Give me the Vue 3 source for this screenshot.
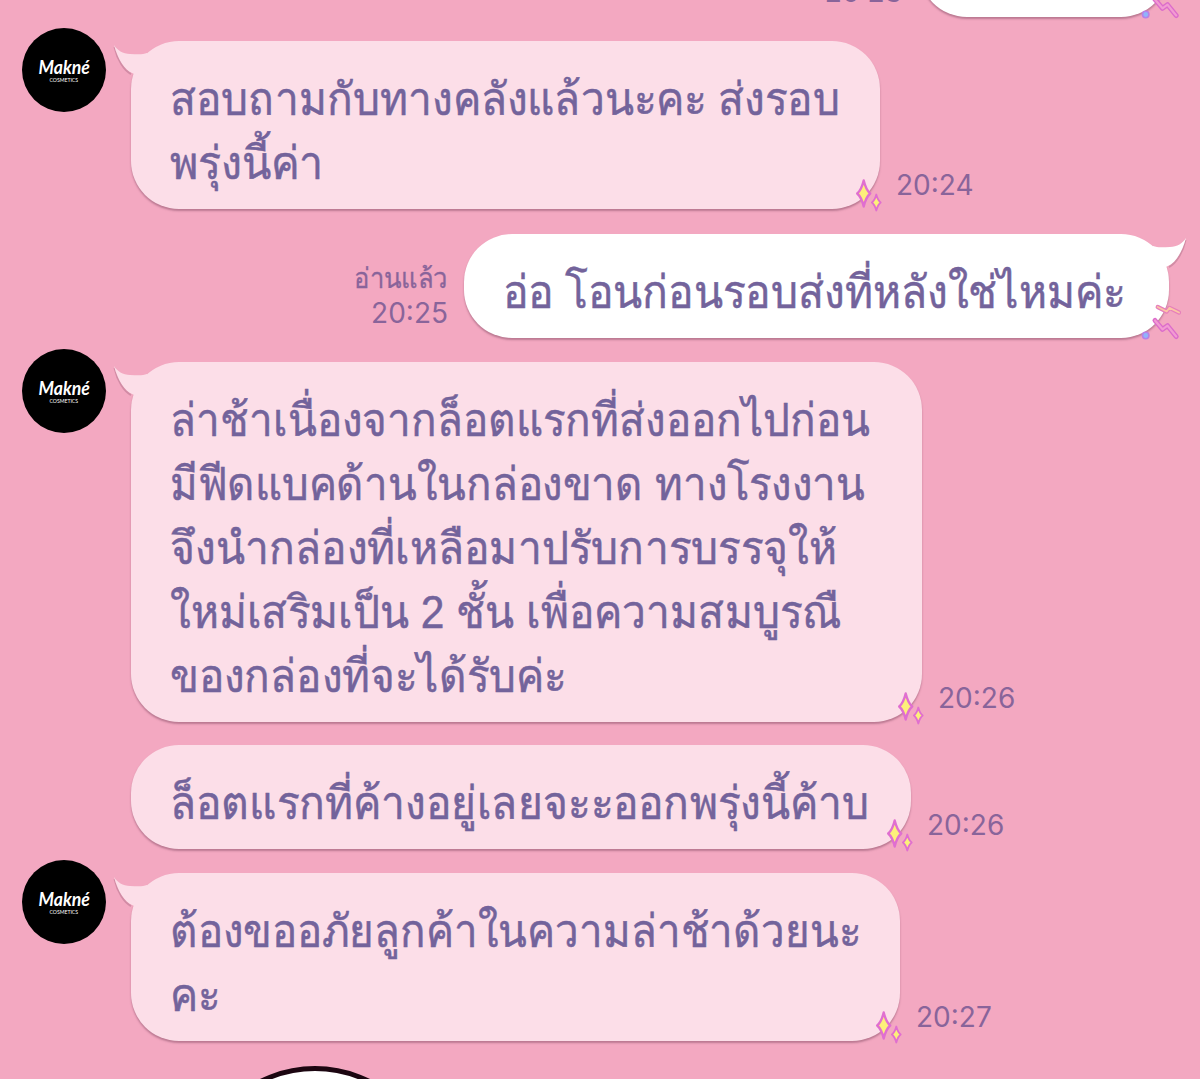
<script setup>
const messages = [
  { id: 1, side: 'own', width: 250, gap: 0, time: '20:23', lines: [] },
  {
    id: 2, side: 'shop', tail: true, width: 749, gap: 24, time: '20:24',
    lines: [
      { text: 'สอบถามกับทางคลังแล้วนะคะ ส่งรอบ', width: 670 },
      { text: 'พรุ่งนี้ค่า', width: 154 },
    ],
  },
  {
    id: 3, side: 'own', tail: true, read: true, width: 705, gap: 25, time: '20:25',
    lines: [{ text: 'อ่อ โอนก่อนรอบส่งที่หลังใช่ไหมค่ะ', width: 623 }],
  },
  {
    id: 4, side: 'shop', tail: true, width: 791, gap: 24, time: '20:26',
    lines: [
      { text: 'ล่าช้าเนื่องจากล็อตแรกที่ส่งออกไปก่อน', width: 700 },
      { text: 'มีฟีดแบคด้านในกล่องขาด ทางโรงงาน', width: 695 },
      { text: 'จึงนำกล่องที่เหลือมาปรับการบรรจุให้', width: 667 },
      { text: 'ใหม่เสริมเป็น 2 ชั้น เพื่อความสมบูรณื', width: 671 },
      { text: 'ของกล่องที่จะได้รับค่ะ', width: 396 },
    ],
  },
  {
    id: 5, side: 'shop', width: 780, gap: 23, time: '20:26',
    lines: [{ text: 'ล็อตแรกที่ค้างอยู่เลยจะะออกพรุ่งนี้ค้าบ', width: 699 }],
  },
  {
    id: 6, side: 'shop', tail: true, width: 769, gap: 24, time: '20:27',
    lines: [
      { text: 'ต้องขออภัยลูกค้าในความล่าช้าด้วยนะ', width: 691 },
      { text: 'คะ', width: 50 },
    ],
  },
]

// Stretches a line of text horizontally to the given width.
const vFit = {
  mounted(el, { value }) {
    el.style.transform = `scaleX(${value / el.offsetWidth})`
  },
}
</script>

<template>
  <main class="chat">
    <section
      v-for="m in messages"
      :key="m.id"
      class="row"
      :class="m.side"
      :style="{ marginTop: m.gap + 'px' }"
    >
      <div v-if="m.side === 'shop'" class="gutter">
        <div v-if="m.tail" class="avatar">
          <span v-fit="51" class="brand">Makné</span>
          <span v-fit="29" class="sub">COSMETICS</span>
        </div>
      </div>

      <div class="bubble" :style="{ width: m.width + 'px' }">
        <svg v-if="m.tail" class="tail" width="38" height="38" viewBox="-18 0 38 38">
          <path class="tail-shade" d="M-16.500 6C-13.500 19-7 29.500 0 33" />
          <path d="M-17 4C-14 9-8 13-1 13C5 13 11 14 16 12L20 20L10 36L1 32C-6 29-13 19-17 4Z" />
        </svg>
        <p v-for="(l, i) in m.lines" :key="i" class="line">
          <span v-fit="l.width" class="text">{{ l.text }}</span>
        </p>
        <svg v-if="m.side === 'shop'" class="deco" width="34" height="36" viewBox="-28 -32 34 36">
          <g fill="#fdf07a" stroke="#e06fd0" stroke-linejoin="round">
            <path stroke-width="2.4" d="M-16.300-28.500Q-14-19-9.800-15.500Q-14-12-16.300-2.500Q-18.600-12-22.800-15.500Q-18.600-19-16.300-28.500Z" />
            <path stroke-width="1.8" d="M-3.700-14.500Q-2.200-8.700 0.700-6.500Q-2.200-4.300-3.700 1.500Q-5.200-4.300-8.100-6.500Q-5.200-8.700-3.700-14.500Z" />
          </g>
        </svg>
        <svg v-else class="deco" width="46" height="42" viewBox="-30 -36 46 42">
          <g fill="none" stroke-linecap="round" stroke-linejoin="round">
            <path stroke="#e67fbb" stroke-width="4.200" d="M-11.300-31L-2.300-26.500L0.500-30.200L10-25.500" />
            <path stroke="#fbc5a6" stroke-width="1.900" d="M-11.300-31L-2.300-26.500L0.500-30.200L10-25.500" />
            <path stroke="#dc6ccb" stroke-width="5" d="M-14-17.500L-6.500-8.700L-1.500-12.300L7.200-1.500" />
            <path stroke="#f29bd2" stroke-width="2.200" d="M-14-17.500L-6.500-8.700L-1.500-12.300L7.200-1.500" />
          </g>
          <circle cx="-23.300" cy="-2.500" r="3.200" fill="#8fb4fb" stroke="#b781e6" stroke-width="1.600" />
        </svg>
      </div>

      <div class="meta">
        <span v-if="m.read" v-fit="94" class="read">อ่านแล้ว</span>
        <span class="time">{{ m.time }}</span>
      </div>
    </section>
    <div class="sticker"></div>
  </main>
</template>

<style>
body { margin: 0; }
</style>

<style scoped>
.chat {
  width: 1200px;
  height: 1079px;
  overflow: hidden;
  display: flex;
  flex-direction: column;
  background: #f3a8c1;
  font-family: "Liberation Sans", sans-serif;
  color: #73639b;
}
.row {
  display: flex;
  flex: none;
  align-items: flex-end;
}
.row:first-child { height: 17px; }
.row.own {
  flex-direction: row-reverse;
  padding-right: 31px;
}
.row:first-child .meta { padding-right: 17px; }
.gutter {
  flex: none;
  align-self: stretch;
  width: 109px;
  padding-left: 22px;
}
.avatar {
  width: 84px;
  height: 84px;
  margin-top: -13px;
  border-radius: 50%;
  background: #000;
  color: #fff;
  display: flex;
  flex-direction: column;
  align-items: center;
  box-sizing: border-box;
  padding-top: 28px;
}
.brand {
  font: italic 700 18px/22px Lato, sans-serif;
  transform-origin: center;
}
.sub {
  font: 400 6px/7px Lato, sans-serif;
  transform-origin: center;
  margin-top: -2px;
}
.bubble {
  position: relative;
  flex: none;
  box-sizing: border-box;
  min-height: 104px;
  padding: 27px 0 13px 39px;
  border-radius: 48px;
  background: #fcdee8;
  box-shadow: 0 2px 2px rgba(150, 90, 115, 0.6);
}
.own .bubble { background: #fff; }
.line {
  margin: 0;
  height: 64px;
  white-space: nowrap;
}
.text {
  display: inline-block;
  font-size: 45.500px;
  line-height: 64px;
  transform-origin: 0 50%;
  -webkit-text-stroke: 0.500px currentColor;
}
.tail {
  position: absolute;
  left: -18px;
  top: 0;
  fill: #fcdee8;
  overflow: visible;
}
.tail-shade {
  fill: none;
  stroke: rgba(150, 90, 115, 0.35);
  stroke-width: 2;
}
.own .tail {
  left: auto;
  right: -18px;
  fill: #fff;
  transform: scaleX(-1);
}
.own .tail .tail-shade { fill: none; }
.deco {
  position: absolute;
  right: -6px;
  bottom: -4px;
}
.own .deco {
  right: -16px;
  bottom: -6px;
}
.meta {
  display: flex;
  flex-direction: column;
  padding: 0 0 7px 16px;
  color: #89649a;
}
.own .meta {
  align-items: flex-end;
  padding: 0 16px 8px 0;
}
.time {
  font: 400 28px/34px Inter, sans-serif;
}
.read {
  font-size: 28px;
  line-height: 34px;
  transform-origin: 100% 50%;
  -webkit-text-stroke: 0.300px currentColor;
}
.sticker {
  flex: none;
  box-sizing: border-box;
  width: 246px;
  height: 246px;
  margin: 25px 0 0 192px;
  border: 5px solid #1c0611;
  border-radius: 50%;
  background: #fff;
}
</style>
